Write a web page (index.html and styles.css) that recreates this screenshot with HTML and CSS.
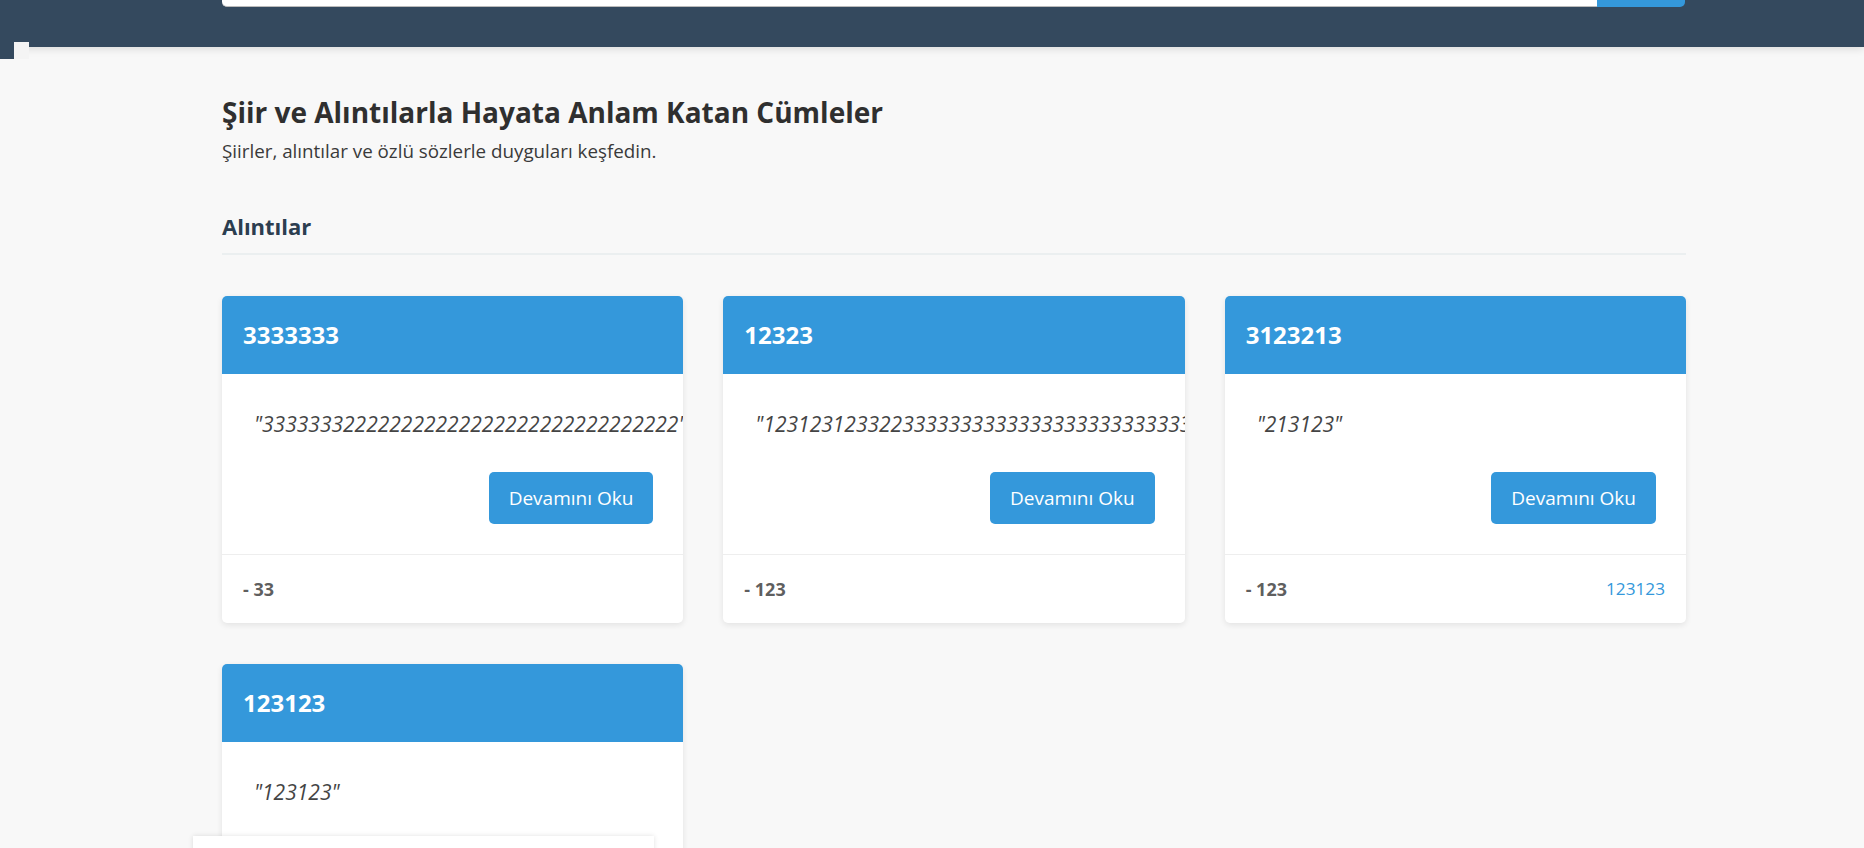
FILE: index.html
```html
<!DOCTYPE html>
<html lang="tr">
<head>
  <meta charset="UTF-8">
  <title>Alıntılar</title>
  <link rel="stylesheet" href="styles.css">
</head>
<body>
  <header class="topbar">
    <form class="search">
      <input type="text" class="search-input">
      <button type="submit" class="search-btn"></button>
    </form>
  </header>
  <div class="edge-dark"></div>
  <div class="edge-light"></div>

  <main class="container">
    <h1 class="page-title">Şiir ve Alıntılarla Hayata Anlam Katan Cümleler</h1>
    <p class="page-sub">Şiirler, alıntılar ve özlü sözlerle duyguları keşfedin.</p>

    <h2 class="section-title">Alıntılar</h2>

    <div class="quote-grid">
      <div class="quote-card">
        <div class="card-head"><h3>3333333</h3></div>
        <div class="card-body">
          <p class="quote-text">"333333322222222222222222222222222222"</p>
          <div class="card-actions"><a href="#" class="btn">Devamını Oku</a></div>
        </div>
        <div class="card-foot"><span class="author">- 33</span></div>
      </div>

      <div class="quote-card">
        <div class="card-head"><h3>12323</h3></div>
        <div class="card-body">
          <p class="quote-text">"123123123322333333333333333333333333333333333"</p>
          <div class="card-actions"><a href="#" class="btn">Devamını Oku</a></div>
        </div>
        <div class="card-foot"><span class="author">- 123</span></div>
      </div>

      <div class="quote-card">
        <div class="card-head"><h3>3123213</h3></div>
        <div class="card-body">
          <p class="quote-text">"213123"</p>
          <div class="card-actions"><a href="#" class="btn">Devamını Oku</a></div>
        </div>
        <div class="card-foot"><span class="author">- 123</span><a href="#" class="source">123123</a></div>
      </div>

      <div class="quote-card">
        <div class="card-head"><h3>123123</h3></div>
        <div class="card-body">
          <p class="quote-text">"123123"</p>
          <div class="card-actions"><a href="#" class="btn">Devamını Oku</a></div>
        </div>
        <div class="card-foot"><span class="author">- 123</span></div>
      </div>
    </div>
  </main>

  <div class="bottom-panel"></div>
</body>
</html>
```

FILE: styles.css
```css
body {
  margin: 0;
  background: #f8f8f8;
  font-family: "Open Sans", "Noto Sans", sans-serif;
  color: #333;
  line-height: 1.6;
}

.topbar {
  height: 47px;
  background: #34495e;
  box-shadow: 0 2px 8px rgba(0, 0, 0, 0.12);
  position: relative;
  z-index: 2;
}

.search {
  display: flex;
  width: 1463px;
  margin-left: 222px;
  height: 7px;
}

.search-input {
  flex: 1;
  border: none;
  border-bottom: 1px solid #bbb;
  border-radius: 0 0 0 5px;
  background: #fff;
  padding: 0;
  margin: 0;
}

.search-btn {
  width: 88px;
  border: none;
  background: #3498db;
  border-radius: 0 0 5px 0;
  padding: 0;
}

/* odd strips left over at the page edges */
.edge-dark {
  position: absolute;
  left: 0;
  top: 47px;
  width: 14px;
  height: 12px;
  background: #34495e;
  z-index: 3;
}

.edge-light {
  position: absolute;
  left: 14px;
  top: 42px;
  width: 15px;
  height: 17px;
  background: #f4f4f4;
  z-index: 3;
}

.bottom-panel {
  position: fixed;
  left: 193px;
  top: 836px;
  width: 461px;
  height: 30px;
  background: #fff;
  box-shadow: 0 0 5px rgba(0, 0, 0, 0.12);
  z-index: 3;
}

.container {
  width: 1464px;
  margin-left: 222px;
  padding-top: 49px;
}

.page-title {
  margin: 0;
  font-size: 28px;
  line-height: 32px;
  font-weight: 700;
  color: #2f2f2f;
}

.page-sub {
  margin: 11px 0 0;
  font-size: 18.8px;
  line-height: 24px;
  color: #3a3a3a;
}

.section-title {
  margin: 48px 0 0;
  padding-bottom: 12px;
  font-size: 22px;
  line-height: 30px;
  font-weight: 700;
  color: #2c3e50;
  border-bottom: 2px solid #ebeff0;
}

.quote-grid {
  display: grid;
  grid-template-columns: repeat(3, 1fr);
  gap: 41px 40px;
  margin-top: 41px;
}

.quote-card {
  background: #fff;
  border-radius: 5px;
  box-shadow: 0 2px 6px rgba(0, 0, 0, 0.09);
  overflow: hidden;
}

.card-head {
  background: #3498db;
  padding: 20px 21px;
}

.card-head h3 {
  margin: 0;
  font-size: 24px;
  line-height: 38px;
  font-weight: 700;
  color: #fff;
}

.card-body {
  padding: 30px;
}

.quote-text {
  margin: 0 0 28px;
  padding-left: 2px;
  font-size: 21px;
  line-height: 40px;
  font-style: italic;
  color: #444;
  white-space: nowrap;
}

.card-actions {
  display: flex;
  justify-content: flex-end;
}

.btn {
  display: inline-block;
  padding: 12px 20px;
  font-size: 19px;
  line-height: 28px;
  color: #fff;
  background: #3498db;
  border-radius: 5px;
  text-decoration: none;
}

.card-foot {
  display: flex;
  justify-content: space-between;
  padding: 20px 21px;
  border-top: 1px solid #eee;
  font-size: 17.2px;
  line-height: 28px;
}

.author {
  font-size: 18px;
  font-weight: 700;
  color: #5f5f5f;
}

.source {
  color: #3498db;
  text-decoration: none;
}
```
